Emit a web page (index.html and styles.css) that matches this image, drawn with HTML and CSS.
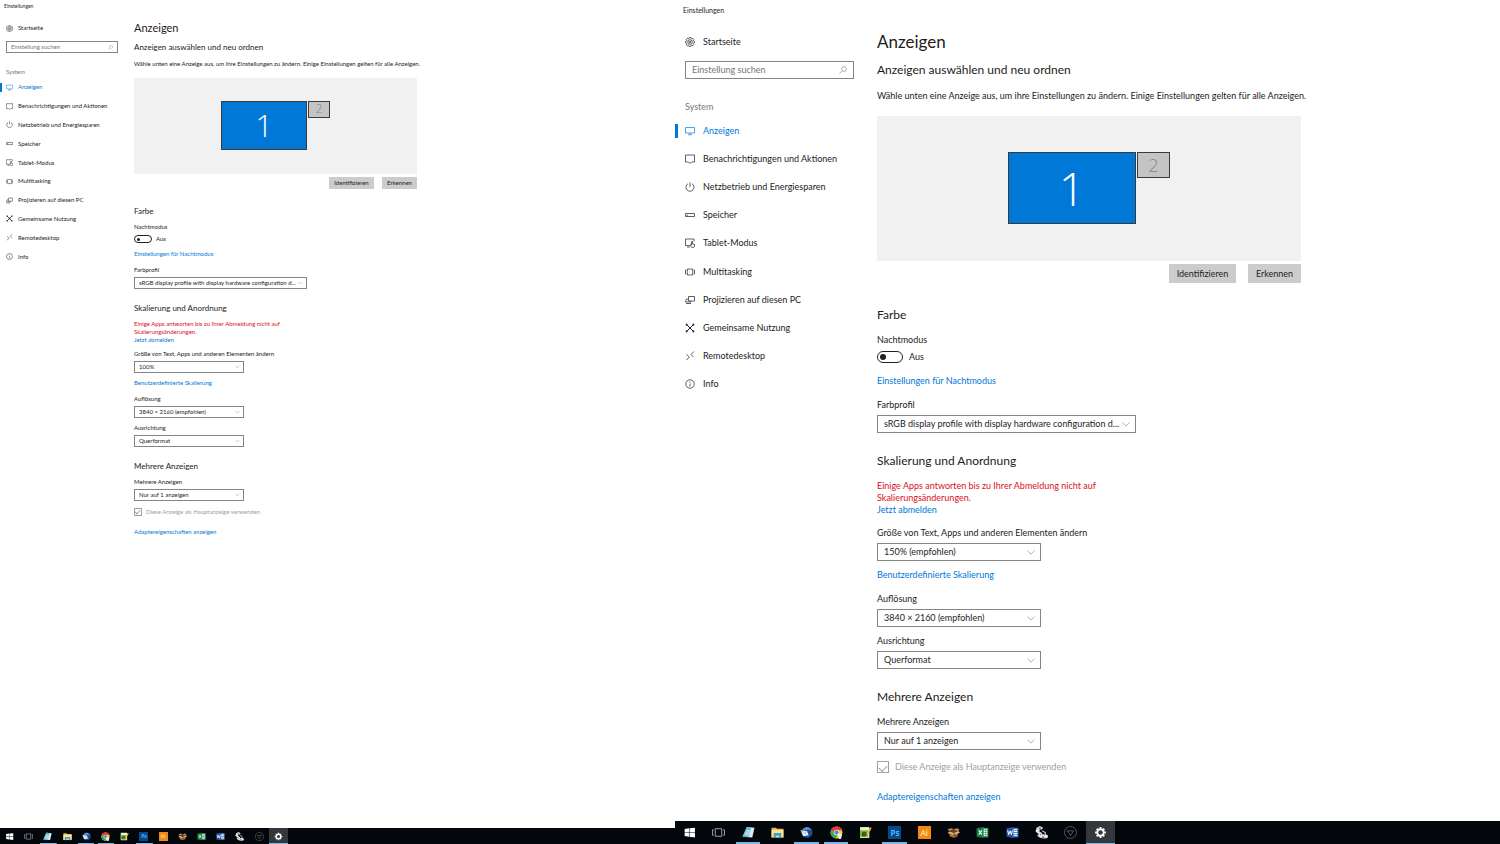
FILE: index.html
```html
<!DOCTYPE html>
<html lang="de">
<head>
<meta charset="utf-8">
<title>Einstellungen</title>
<link rel="stylesheet" href="styles.css">
</head>
<body>
<svg class="sprite" aria-hidden="true">
  <symbol id="gear" viewBox="0 0 20 20"><path d="M8.4 1h3.2l.5 2.2 1.5.6 1.9-1.2 2.2 2.2-1.2 1.9.6 1.5 2.2.5v2.6l-2.2.5-.6 1.5 1.2 1.9-2.2 2.2-1.9-1.2-1.5.6-.5 2.2H8.4l-.5-2.2-1.5-.6-1.9 1.2-2.2-2.2 1.2-1.9-.6-1.5L1 11.300V8.700l1.900-.5.6-1.500-1.200-1.900 2.200-2.200 1.900 1.200 1.500-.6z"/><circle cx="10" cy="10" r="4.500"/><circle cx="10" cy="10" r="1.500"/></symbol>
  <symbol id="search" viewBox="0 0 20 20"><circle cx="12.500" cy="7.500" r="6"/><path d="M8 12l-7 7"/></symbol>
  <symbol id="display" viewBox="0 0 20 20"><path d="M1 3h18v11H1zM10 14v3M6 17.500h8"/></symbol>
  <symbol id="message" viewBox="0 0 20 20"><path d="M1 2h18v14h-6l-3 3-3-3H1z"/></symbol>
  <symbol id="power" viewBox="0 0 20 20"><path d="M10 1v9M6 3.500a8 8 0 1 0 8 0"/></symbol>
  <symbol id="storage" viewBox="0 0 20 20"><path d="M1 7h18v6H1zM3 10.500h3"/></symbol>
  <symbol id="tablet" viewBox="0 0 20 20"><path d="M9 15H1V2h17v5M4 18h6M13 14V7.500c0-1.500 2-1.500 2 0V12l4 1v3c0 2-1 3-3 3-3 0-4-1-6-5 1-1 2-1 3 0z"/></symbol>
  <symbol id="multi" viewBox="0 0 20 20"><path d="M4.500 4h11v12h-11zM2.500 6H1v8h1.500M17.500 6H19v8h-1.500"/></symbol>
  <symbol id="project" viewBox="0 0 20 20"><path d="M7 3h12v9H7zM6 8H3l-2 6h11v-2M2 17h10"/></symbol>
  <symbol id="share" viewBox="0 0 20 20"><path d="M3 3l14 14M17 3L3 17" stroke-width="2"/><path d="M1.500 1.500h3.500v3.500H1.500zM15 1.500h3.500V5H15zM1.500 15H5v3.500H1.500zM15 15h3.500v3.500H15zM8 8h4v4H8z" fill="currentColor" stroke="none"/></symbol>
  <symbol id="remote" viewBox="0 0 20 20"><path d="M3 7l5.500 5L3 18M18 1l-6 6 5 5"/></symbol>
  <symbol id="info" viewBox="0 0 20 20"><circle cx="10" cy="10" r="8.500"/><path d="M10 9v6M10 5v2"/></symbol>
  <symbol id="chevron" viewBox="0 0 20 20"><path d="M1 5l9 9 9-9"/></symbol>

  <symbol id="t-start" viewBox="0 0 24 24"><path fill="#fff" d="M3 5.500l8-1.200v7.200H3zM12 4.200L22 3v8.500H12zM3 12.500h8v7.200l-8-1.200zM12 12.500h10V21l-10-1.200z"/></symbol>
  <symbol id="t-view" viewBox="0 0 24 24"><path fill="none" stroke="#bbb" stroke-width="1.500" d="M6 5h12v14H6zM3.500 7H1v10h2.500M20.500 7H23v10h-2.500"/></symbol>
  <symbol id="t-note" viewBox="0 0 24 24"><path fill="#d9eef4" d="M9 2l14 1-4 18L1 20z"/><path fill="#69b9d2" d="M9 2l8 .7L12 20.600 1 20z"/><path fill="#a9dbe8" d="M9 7l8 1-4 10-9-1z"/></symbol>
  <symbol id="t-folder" viewBox="0 0 24 24"><path fill="#e9b949" d="M1 3h8l2 2h12v16H1z"/><path fill="#ffe391" d="M1 7h22v14H1z"/><path fill="#38a2df" d="M5 13h14v9h-4v-4H9v4H5z"/></symbol>
  <symbol id="t-mail" viewBox="0 0 24 24"><circle cx="13" cy="12" r="10" fill="#1d4c92"/><path fill="#5b9be0" d="M4 7c5-7 15-6 18 2-3-3-5-3-8-2z"/><path fill="#e9edf2" d="M1 8l12 1 3 8-10 2z"/><path fill="none" stroke="#8192aa" d="M1 8l9 6 3-5"/></symbol>
  <symbol id="t-chrome" viewBox="0 0 24 24"><circle cx="12" cy="12" r="11" fill="#f7c92b"/><path fill="#e23c30" d="M2.500 6.500a11 11 0 0 1 20 1.500H12l-4.500 6z"/><path fill="#38a852" d="M2.500 6.500L8 15l5 2-2 6A11 11 0 0 1 2.500 6.500z"/><circle cx="12" cy="12" r="5" fill="#fff"/><circle cx="12" cy="12" r="4" fill="#4387ed"/><path fill="#eee" d="M15 14h6l1 4-2 6h-4l-1-5z"/></symbol>
  <symbol id="t-edit" viewBox="0 0 24 24"><path fill="#edf3d8" d="M2 2h17v20H2z"/><path fill="#79b52c" d="M2 8h15v12H2z"/><path fill="none" stroke="#24490d" stroke-width="2" d="M6 15h7c0-5-7-4-7 0 0 4 5 4 7 2"/><path stroke="#e6b940" stroke-width="3" d="M22 3l-7 13"/></symbol>
  <symbol id="t-box" viewBox="0 0 24 24"><path fill="#a9713f" d="M4 10l9 3v9l-8-3z"/><path fill="#8b552b" d="M13 13l7-3v9l-7 3z"/><path fill="#68401f" d="M4 9l7-3 9 3-7 4z"/><path fill="#dcae7b" d="M4 10l9 3-2 3-10-3zM13 13l8-4 3 3-8 4z"/><path fill="#c28e5c" d="M4 9L1 6l8-2 3 2zM12 6l7-2 4 3-3 3z"/></symbol>
  <symbol id="t-excel" viewBox="0 0 24 24"><path fill="#f5fff8" stroke="#1f8750" stroke-width="2" d="M12 4h10v16H12z"/><path stroke="#1f8750" d="M13 8h9M13 12h9M13 16h9M18 4v16"/><path fill="#178047" d="M1 4l13-2v20L1 20z"/><path stroke="#fff" stroke-width="2" d="M5 8l6 8M11 8l-6 8"/></symbol>
  <symbol id="t-word" viewBox="0 0 24 24"><path fill="#fff" stroke="#2b63b7" stroke-width="2" d="M12 4h10v16H12z"/><path stroke="#2b63b7" stroke-width="1.500" d="M14 8h7M14 12h7M14 16h7"/><path fill="#2458ad" d="M1 4l13-2v20L1 20z"/><path fill="none" stroke="#fff" stroke-width="1.800" d="M3 8l2 8 2.500-7L10 16l2-8"/></symbol>
  <symbol id="t-tools" viewBox="0 0 24 24"><path fill="#e4e4e4" d="M3 3l6-3 6 3-3 4-3-1-1 4 5 3 1 6-4 3-6-4 3-3-6-5z"/><path fill="#777" d="M6 4l4-2 2 2-4 2zM8 14l4 1v4z"/><ellipse cx="17" cy="19" rx="7" ry="4" fill="#e8e8e8"/><path stroke="#bb3535" stroke-width="2" d="M13 20l4 1"/><path stroke="#ddd" stroke-width="2" d="M13 9l6 3-1 6"/></symbol>
  <symbol id="t-wheel" viewBox="0 0 24 24"><g fill="none" stroke="#66696c" stroke-width="1.500"><circle cx="12" cy="12" r="11"/><path d="M6 9h12l-4 5-2 4-2-4z"/></g></symbol>
  <symbol id="t-gear" viewBox="0 0 24 24"><circle cx="12" cy="12" r="6" fill="none" stroke="#fff" stroke-width="3.500"/><path stroke="#fff" stroke-width="3.500" d="M12 2v3M12 19v3M2 12h3M19 12h3M5 5l2 2M17 17l2 2M19 5l-2 2M7 17l-2 2"/></symbol>
</svg>

<div class="desktops">
  <section class="pane small">
    <header class="title">Einstellungen</header>
    <div class="content">
      <nav class="side">
        <a class="home" href="#"><svg class="ico"><use href="#gear"/></svg>Startseite</a>
        <div class="search"><input type="text" placeholder="Einstellung suchen" aria-label="Einstellung suchen"><svg class="ico"><use href="#search"/></svg></div>
        <div class="group">System</div>
        <ul class="menu">
          <li><a class="active" href="#"><svg class="ico"><use href="#display"/></svg>Anzeigen</a></li>
          <li><a href="#"><svg class="ico"><use href="#message"/></svg>Benachrichtigungen und Aktionen</a></li>
          <li><a href="#"><svg class="ico"><use href="#power"/></svg>Netzbetrieb und Energiesparen</a></li>
          <li><a href="#"><svg class="ico"><use href="#storage"/></svg>Speicher</a></li>
          <li><a href="#"><svg class="ico"><use href="#tablet"/></svg>Tablet-Modus</a></li>
          <li><a href="#"><svg class="ico"><use href="#multi"/></svg>Multitasking</a></li>
          <li><a href="#"><svg class="ico"><use href="#project"/></svg>Projizieren auf diesen PC</a></li>
          <li><a href="#"><svg class="ico"><use href="#share"/></svg>Gemeinsame Nutzung</a></li>
          <li><a href="#"><svg class="ico"><use href="#remote"/></svg>Remotedesktop</a></li>
          <li><a href="#"><svg class="ico"><use href="#info"/></svg>Info</a></li>
        </ul>
      </nav>
      <main class="settings">
        <h1>Anzeigen</h1>
        <h2 class="first">Anzeigen auswählen und neu ordnen</h2>
        <p class="intro">Wähle unten eine Anzeige aus, um ihre Einstellungen zu ändern. Einige Einstellungen gelten für alle Anzeigen.</p>
        <div class="canvas"><div class="monitor main-monitor">1</div><div class="monitor off-monitor">2</div></div>
        <div class="actions"><button type="button">Identifizieren</button><button type="button">Erkennen</button></div>
        <h2>Farbe</h2>
        <label class="sub" for="night-s">Nachtmodus</label>
        <div class="toggle"><input type="checkbox" role="switch" id="night-s"><span>Aus</span></div>
        <a class="link toggle-link" href="#">Einstellungen für Nachtmodus</a>
        <label class="after-link" for="profile-s">Farbprofil</label>
        <div class="select wide"><select id="profile-s"><option>sRGB display profile with display hardware configuration d...</option></select><svg class="ico"><use href="#chevron"/></svg></div>
        <h2>Skalierung und Anordnung</h2>
        <p class="warning">Einige Apps antworten bis zu Ihrer Abmeldung nicht auf<br>Skalierungsänderungen.</p>
        <a class="link" href="#">Jetzt abmelden</a>
        <label class="sub" for="scale-s">Größe von Text, Apps und anderen Elementen ändern</label>
        <div class="select"><select id="scale-s"><option>100%</option></select><svg class="ico"><use href="#chevron"/></svg></div>
        <a class="link field-link" href="#">Benutzerdefinierte Skalierung</a>
        <label class="after-link" for="res-s">Auflösung</label>
        <div class="select"><select id="res-s"><option>3840 × 2160 (empfohlen)</option></select><svg class="ico"><use href="#chevron"/></svg></div>
        <label class="after-field" for="orient-s">Ausrichtung</label>
        <div class="select"><select id="orient-s"><option>Querformat</option></select><svg class="ico"><use href="#chevron"/></svg></div>
        <h2>Mehrere Anzeigen</h2>
        <label class="sub" for="multi-s">Mehrere Anzeigen</label>
        <div class="select"><select id="multi-s"><option>Nur auf 1 anzeigen</option></select><svg class="ico"><use href="#chevron"/></svg></div>
        <label class="check"><input type="checkbox" checked disabled>Diese Anzeige als Hauptanzeige verwenden</label>
        <a class="link last-link" href="#">Adaptereigenschaften anzeigen</a>
      </main>
    </div>
    <footer class="taskbar">
      <button type="button" aria-label="Start"><svg><use href="#t-start"/></svg></button>
      <button type="button" aria-label="Taskansicht"><svg><use href="#t-view"/></svg></button>
      <button type="button" class="open" aria-label="Notizen"><svg><use href="#t-note"/></svg></button>
      <button type="button" aria-label="Explorer"><svg><use href="#t-folder"/></svg></button>
      <button type="button" class="open" aria-label="E-Mail"><svg><use href="#t-mail"/></svg></button>
      <button type="button" class="open" aria-label="Browser"><svg><use href="#t-chrome"/></svg></button>
      <button type="button" aria-label="Editor"><svg><use href="#t-edit"/></svg></button>
      <button type="button" class="open"><span class="app ps">Ps</span></button>
      <button type="button"><span class="app ai">Ai</span></button>
      <button type="button" aria-label="Paket"><svg><use href="#t-box"/></svg></button>
      <button type="button" aria-label="Tabellen"><svg><use href="#t-excel"/></svg></button>
      <button type="button" aria-label="Dokumente"><svg><use href="#t-word"/></svg></button>
      <button type="button" aria-label="Werkzeuge"><svg><use href="#t-tools"/></svg></button>
      <button type="button" aria-label="Lenkrad"><svg><use href="#t-wheel"/></svg></button>
      <button type="button" class="open current" aria-label="Einstellungen"><svg><use href="#t-gear"/></svg></button>
    </footer>
  </section>

  <section class="pane large">
    <header class="title">Einstellungen</header>
    <div class="content">
      <nav class="side">
        <a class="home" href="#"><svg class="ico"><use href="#gear"/></svg>Startseite</a>
        <div class="search"><input type="text" placeholder="Einstellung suchen" aria-label="Einstellung suchen"><svg class="ico"><use href="#search"/></svg></div>
        <div class="group">System</div>
        <ul class="menu">
          <li><a class="active" href="#"><svg class="ico"><use href="#display"/></svg>Anzeigen</a></li>
          <li><a href="#"><svg class="ico"><use href="#message"/></svg>Benachrichtigungen und Aktionen</a></li>
          <li><a href="#"><svg class="ico"><use href="#power"/></svg>Netzbetrieb und Energiesparen</a></li>
          <li><a href="#"><svg class="ico"><use href="#storage"/></svg>Speicher</a></li>
          <li><a href="#"><svg class="ico"><use href="#tablet"/></svg>Tablet-Modus</a></li>
          <li><a href="#"><svg class="ico"><use href="#multi"/></svg>Multitasking</a></li>
          <li><a href="#"><svg class="ico"><use href="#project"/></svg>Projizieren auf diesen PC</a></li>
          <li><a href="#"><svg class="ico"><use href="#share"/></svg>Gemeinsame Nutzung</a></li>
          <li><a href="#"><svg class="ico"><use href="#remote"/></svg>Remotedesktop</a></li>
          <li><a href="#"><svg class="ico"><use href="#info"/></svg>Info</a></li>
        </ul>
      </nav>
      <main class="settings">
        <h1>Anzeigen</h1>
        <h2 class="first">Anzeigen auswählen und neu ordnen</h2>
        <p class="intro">Wähle unten eine Anzeige aus, um ihre Einstellungen zu ändern. Einige Einstellungen gelten für alle Anzeigen.</p>
        <div class="canvas"><div class="monitor main-monitor">1</div><div class="monitor off-monitor">2</div></div>
        <div class="actions"><button type="button">Identifizieren</button><button type="button">Erkennen</button></div>
        <h2>Farbe</h2>
        <label class="sub" for="night-l">Nachtmodus</label>
        <div class="toggle"><input type="checkbox" role="switch" id="night-l"><span>Aus</span></div>
        <a class="link toggle-link" href="#">Einstellungen für Nachtmodus</a>
        <label class="after-link" for="profile-l">Farbprofil</label>
        <div class="select wide"><select id="profile-l"><option>sRGB display profile with display hardware configuration d...</option></select><svg class="ico"><use href="#chevron"/></svg></div>
        <h2>Skalierung und Anordnung</h2>
        <p class="warning">Einige Apps antworten bis zu Ihrer Abmeldung nicht auf<br>Skalierungsänderungen.</p>
        <a class="link" href="#">Jetzt abmelden</a>
        <label class="sub" for="scale-l">Größe von Text, Apps und anderen Elementen ändern</label>
        <div class="select"><select id="scale-l"><option>150% (empfohlen)</option></select><svg class="ico"><use href="#chevron"/></svg></div>
        <a class="link field-link" href="#">Benutzerdefinierte Skalierung</a>
        <label class="after-link" for="res-l">Auflösung</label>
        <div class="select"><select id="res-l"><option>3840 × 2160 (empfohlen)</option></select><svg class="ico"><use href="#chevron"/></svg></div>
        <label class="after-field" for="orient-l">Ausrichtung</label>
        <div class="select"><select id="orient-l"><option>Querformat</option></select><svg class="ico"><use href="#chevron"/></svg></div>
        <h2>Mehrere Anzeigen</h2>
        <label class="sub" for="multi-l">Mehrere Anzeigen</label>
        <div class="select"><select id="multi-l"><option>Nur auf 1 anzeigen</option></select><svg class="ico"><use href="#chevron"/></svg></div>
        <label class="check"><input type="checkbox" checked disabled>Diese Anzeige als Hauptanzeige verwenden</label>
        <a class="link last-link" href="#">Adaptereigenschaften anzeigen</a>
      </main>
    </div>
    <footer class="taskbar">
      <button type="button" aria-label="Start"><svg><use href="#t-start"/></svg></button>
      <button type="button" aria-label="Taskansicht"><svg><use href="#t-view"/></svg></button>
      <button type="button" class="open" aria-label="Notizen"><svg><use href="#t-note"/></svg></button>
      <button type="button" aria-label="Explorer"><svg><use href="#t-folder"/></svg></button>
      <button type="button" class="open" aria-label="E-Mail"><svg><use href="#t-mail"/></svg></button>
      <button type="button" class="open" aria-label="Browser"><svg><use href="#t-chrome"/></svg></button>
      <button type="button" aria-label="Editor"><svg><use href="#t-edit"/></svg></button>
      <button type="button" class="open"><span class="app ps">Ps</span></button>
      <button type="button"><span class="app ai">Ai</span></button>
      <button type="button" aria-label="Paket"><svg><use href="#t-box"/></svg></button>
      <button type="button" aria-label="Tabellen"><svg><use href="#t-excel"/></svg></button>
      <button type="button" aria-label="Dokumente"><svg><use href="#t-word"/></svg></button>
      <button type="button" aria-label="Werkzeuge"><svg><use href="#t-tools"/></svg></button>
      <button type="button" aria-label="Lenkrad"><svg><use href="#t-wheel"/></svg></button>
      <button type="button" class="open current" aria-label="Einstellungen"><svg><use href="#t-gear"/></svg></button>
    </footer>
  </section>
</div>
</body>
</html>
```
FILE: styles.css
```css
* { box-sizing: border-box; }

body {
  margin: 0;
  background: #fff;
  color: #1c1c1c;
  font-family: Lato, "Open Sans", sans-serif;
}

.sprite { position: absolute; width: 0; height: 0; }

.desktops {
  display: grid;
  grid-template-columns: 45fr 55fr;
  min-height: 100vh;
}

/* Size sets of the 100% and the 150% desktop */
.small {
  --text: 6px; --line: 8px; --tiny: 5px;
  --h1: 11px; --h1-line: 14px; --h2: 8px; --h2-line: 12px;
  --title-h: 12px; --title-x: 4px;
  --top: 9px; --side-w: 134px; --pad: 6px; --side-right: 16px; --ico: 7px; --ico-gap: 5px;
  --home-h: 14px; --search-gap: 6px; --group-gap: 15px; --menu-gap: 2px; --menu-h: 188px; --mark-w: 2px; --mark-h: 9px;
  --main-w: 283px; --first-gap: 6px; --intro-gap: 7px; --canvas-gap: 10px; --canvas-h: 96px;
  --mon-w: 86px; --mon-h: 49px; --off-w: 22px; --off-h: 17px; --mon-gap: 1px; --mon-text: 31px; --off-text: 12px;
  --btn-h: 12px; --btn-gap: 8px; --btn1: 45px; --btn2: 35px; --actions-gap: 3px; --actions-after: 16px;
  --sub-gap: 6px; --toggle-gap: 4px; --toggle-w: 18px; --toggle-h: 8px; --knob: 3px;
  --toggle-link-gap: 7px; --after-link-gap: 8px; --after-field-gap: 6px; --field-gap: 3px; --field-h: 12px;
  --field-w: 110px; --wide-w: 173px; --field-pad: 4px; --h2-gap: 13px; --check-gap: 7px; --last-gap: 12px; --check: 8px;
  --bar-h: 16px; --bar-w: 288px; --app: 9px; --app-text: 5px;
}
.large {
  --text: 9px; --line: 12px; --tiny: 7px;
  --h1: 17px; --h1-line: 20px; --h2: 12px; --h2-line: 16px;
  --title-h: 20px; --title-x: 8px;
  --top: 12px; --side-w: 202px; --pad: 10px; --side-right: 23px; --ico: 10px; --ico-gap: 8px;
  --home-h: 20px; --search-gap: 9px; --group-gap: 22px; --menu-gap: 4px; --menu-h: 281px; --mark-w: 3px; --mark-h: 14px;
  --main-w: 424px; --first-gap: 10px; --intro-gap: 12px; --canvas-gap: 14px; --canvas-h: 145px;
  --mon-w: 128px; --mon-h: 72px; --off-w: 33px; --off-h: 26px; --mon-gap: 1px; --mon-text: 46px; --off-text: 18px;
  --btn-h: 19px; --btn-gap: 12px; --btn1: 67px; --btn2: 53px; --actions-gap: 3px; --actions-after: 24px;
  --sub-gap: 11px; --toggle-gap: 5px; --toggle-w: 26px; --toggle-h: 12px; --knob: 6px;
  --toggle-link-gap: 12px; --after-link-gap: 12px; --after-field-gap: 8px; --field-gap: 4px; --field-h: 18px;
  --field-w: 164px; --wide-w: 259px; --field-pad: 6px; --h2-gap: 20px; --check-gap: 11px; --last-gap: 18px; --check: 12px;
  --bar-h: 23px; --bar-w: 440px; --app: 13px; --app-text: 8px;
}

.pane {
  display: flex;
  flex-direction: column;
  min-width: 0;
  font-size: var(--text);
  line-height: var(--line);
}
.title {
  height: var(--title-h);
  padding-left: var(--title-x);
  font-size: var(--tiny);
  line-height: var(--title-h);
}
.content {
  display: flex;
  flex: 1;
  padding-top: var(--top);
}

.ico {
  flex: none;
  width: var(--ico);
  height: var(--ico);
  fill: none;
  stroke: currentColor;
  stroke-width: 1.4;
}

/* Navigation */
.side { flex: none; width: var(--side-w); }
.home, .menu a {
  display: flex;
  align-items: center;
  gap: var(--ico-gap);
  width: 100%;
  padding-left: var(--pad);
  color: inherit;
  text-decoration: none;
  white-space: nowrap;
}
.home { height: var(--home-h); }
.search {
  display: flex;
  align-items: center;
  height: var(--field-h);
  margin: var(--search-gap) var(--side-right) 0 var(--pad);
  padding: 0 var(--field-pad) 0 var(--field-pad);
  border: 1px solid #858585;
  color: #777;
}
.search input {
  flex: 1;
  min-width: 0;
  padding: 0;
  border: 0;
  outline: 0;
  background: none;
  font: inherit;
}
.search input::placeholder { color: #777; opacity: 1; }
.search .ico {
  width: calc(var(--ico) - 2px);
  height: calc(var(--ico) - 2px);
}
.group {
  margin-top: var(--group-gap);
  padding-left: var(--pad);
  color: #777;
}
.menu {
  display: grid;
  grid-auto-rows: 1fr;
  height: var(--menu-h);
  margin: var(--menu-gap) 0 0;
  padding: 0;
  list-style: none;
}
.menu li { display: flex; align-items: center; }
.menu .active {
  height: var(--mark-h);
  padding-left: calc(var(--pad) - var(--mark-w));
  border-left: var(--mark-w) solid #0078d7;
  color: #0078d7;
}

/* Settings */
.settings {
  display: flex;
  flex: 0 1 var(--main-w);
  flex-direction: column;
  align-items: flex-start;
  min-width: 0;
}
.settings h1, .settings h2, .settings p { margin: 0; font-weight: 400; }
.settings h1 { font-size: var(--h1); line-height: var(--h1-line); }
.settings h2 { margin-top: var(--h2-gap); font-size: var(--h2); line-height: var(--h2-line); }
.settings .first { margin-top: var(--first-gap); }
.settings .intro { margin-top: var(--intro-gap); white-space: nowrap; }
.canvas {
  display: flex;
  align-items: center;
  justify-content: center;
  align-self: stretch;
  gap: var(--mon-gap);
  height: var(--canvas-h);
  margin-top: var(--canvas-gap);
  padding-bottom: 2px;
  background: #f1f1f1;
}
.monitor {
  display: flex;
  align-items: center;
  justify-content: center;
  border: 1px solid #3a3a3a;
  font-family: "Open Sans", "Noto Sans", sans-serif;
  font-weight: 300;
}
.main-monitor {
  width: var(--mon-w);
  height: var(--mon-h);
  background: #0078d7;
  color: #fff;
  font-size: var(--mon-text);
}
.off-monitor {
  width: var(--off-w);
  height: var(--off-h);
  margin-bottom: calc(var(--mon-h) - var(--off-h));
  background: #c4c4c4;
  color: #858585;
  font-size: var(--off-text);
}
.actions {
  display: flex;
  align-self: flex-end;
  gap: var(--btn-gap);
  margin-top: var(--actions-gap);
}
.settings .actions + h2 { margin-top: var(--actions-after); }
.actions button {
  width: var(--btn1);
  height: var(--btn-h);
  padding: 0;
  border: 0;
  background: #ccc;
  color: inherit;
  font: inherit;
}
.actions button:last-child { width: var(--btn2); }

.sub { margin-top: var(--sub-gap); }
.settings .warning { margin-top: var(--sub-gap); color: #d90f1c; }
.link { color: #0078d7; text-decoration: none; }
.toggle-link { margin-top: var(--toggle-link-gap); }
.after-link { margin-top: var(--after-link-gap); }
.after-field { margin-top: var(--after-field-gap); }
.field-link { margin-top: var(--after-field-gap); }
.last-link { margin-top: var(--last-gap); }

.toggle {
  display: flex;
  align-items: center;
  gap: var(--field-pad);
  height: var(--toggle-h);
  margin-top: var(--toggle-gap);
}
.toggle input {
  display: flex;
  align-items: center;
  width: var(--toggle-w);
  height: var(--toggle-h);
  margin: 0;
  padding: 0 2px;
  border: 1px solid #222;
  border-radius: var(--toggle-h);
  appearance: none;
}
.toggle input::before {
  width: var(--knob);
  height: var(--knob);
  border-radius: 50%;
  background: #222;
  content: "";
}

.select {
  position: relative;
  width: var(--field-w);
  max-width: 100%;
  margin-top: var(--field-gap);
}
.select.wide { width: var(--wide-w); }
.select select {
  display: block;
  width: 100%;
  height: var(--field-h);
  padding: 0 0 0 var(--field-pad);
  border: 1px solid #858585;
  border-radius: 0;
  background: #fff;
  color: inherit;
  font: inherit;
  appearance: none;
}
.select .ico {
  position: absolute;
  top: 25%;
  right: var(--field-pad);
  width: calc(var(--ico) - 2px);
  height: 50%;
  color: #777;
  pointer-events: none;
}

.check {
  display: flex;
  align-items: center;
  gap: var(--field-pad);
  height: var(--check);
  margin-top: var(--check-gap);
  color: #a0a0a0;
}
.check input {
  display: grid;
  place-items: center;
  width: var(--check);
  height: var(--check);
  margin: 0;
  border: 1px solid #a0a0a0;
  appearance: none;
}
.check input::before {
  width: 70%;
  height: 35%;
  border: solid #a0a0a0;
  border-width: 0 0 1px 1px;
  transform: rotate(-45deg);
  content: "";
}

/* Taskbar */
.taskbar {
  display: grid;
  grid-template-columns: repeat(15, minmax(0, calc(var(--bar-w) / 15)));
  height: var(--bar-h);
  background: #03070b;
}
.taskbar button {
  display: flex;
  align-items: center;
  justify-content: center;
  padding: 0;
  border: 0;
  background: none;
}
.taskbar svg { width: var(--app); height: var(--app); }
.taskbar .open { background: linear-gradient(#76b9ed, #76b9ed) center bottom / 84% 2px no-repeat; }
.small .taskbar .open { background-size: 84% 1px; }
.taskbar .current { background-color: #34383c; }
.pane .taskbar .current { background-size: 100% 1px; }
.app {
  display: grid;
  place-items: center;
  width: var(--app);
  height: var(--app);
  font-family: "Open Sans", "Noto Sans", sans-serif;
  font-size: var(--app-text);
  font-weight: 600;
  line-height: 1;
}
.ps { background: #064a8c; color: #5cc4ff; }
.ai { background: #f08a12; color: #ffe2a4; }
```
